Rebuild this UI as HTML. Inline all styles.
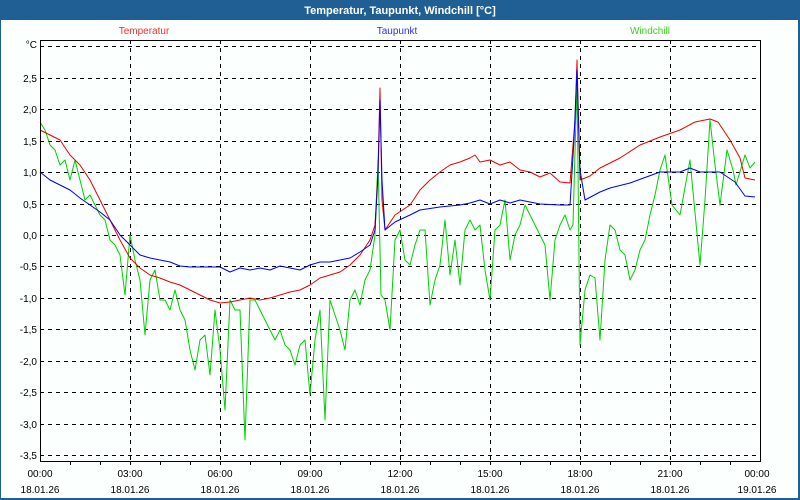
<!DOCTYPE html>
<html><head><meta charset="utf-8"><style>
html,body{margin:0;padding:0;width:800px;height:500px;overflow:hidden;background:#1f5f94}
</style></head><body>
<svg width="800" height="500" xmlns="http://www.w3.org/2000/svg" font-family="Liberation Sans, sans-serif" shape-rendering="crispEdges">
<rect x="0" y="0" width="800" height="500" fill="#1f5f94"/>
<rect x="1" y="20" width="797" height="478" fill="#fbfffd"/>
<text x="400" y="14" fill="#fff" font-size="11" font-weight="bold" text-anchor="middle">Temperatur, Taupunkt, Windchill [°C]</text>
<text x="144" y="34" fill="#f03030" font-size="10" text-anchor="middle">Temperatur</text>
<text x="397" y="34" fill="#3030f0" font-size="10" text-anchor="middle">Taupunkt</text>
<text x="650" y="34" fill="#40d020" font-size="10" text-anchor="middle">Windchill</text>
<g stroke="#000" stroke-dasharray="4,4" stroke-width="1">
<line x1="40" y1="46.5" x2="760" y2="46.5"/><line x1="40" y1="78.5" x2="760" y2="78.5"/><line x1="40" y1="109.5" x2="760" y2="109.5"/><line x1="40" y1="141.5" x2="760" y2="141.5"/><line x1="40" y1="172.5" x2="760" y2="172.5"/><line x1="40" y1="204.5" x2="760" y2="204.5"/><line x1="40" y1="235.5" x2="760" y2="235.5"/><line x1="40" y1="266.5" x2="760" y2="266.5"/><line x1="40" y1="298.5" x2="760" y2="298.5"/><line x1="40" y1="329.5" x2="760" y2="329.5"/><line x1="40" y1="361.5" x2="760" y2="361.5"/><line x1="40" y1="392.5" x2="760" y2="392.5"/><line x1="40" y1="424.5" x2="760" y2="424.5"/><line x1="40" y1="455.5" x2="760" y2="455.5"/>
<line x1="130.5" y1="40" x2="130.5" y2="461"/><line x1="220.5" y1="40" x2="220.5" y2="461"/><line x1="310.5" y1="40" x2="310.5" y2="461"/><line x1="400.5" y1="40" x2="400.5" y2="461"/><line x1="490.5" y1="40" x2="490.5" y2="461"/><line x1="580.5" y1="40" x2="580.5" y2="461"/><line x1="670.5" y1="40" x2="670.5" y2="461"/>
</g>
<g fill="none" stroke-width="1" shape-rendering="auto" stroke-linejoin="round">
<polyline stroke="#00d000" points="40,122 45,130 50,145 55,150 60,165 65,160 70,180 75,160 80,180 85,200 90,195 95,205 100,215 105,220 110,240 115,245 120,255 125,295 130,235 135,260 140,280 145,335 150,280 155,270 160,300 165,300 170,310 175,290 180,310 185,320 190,350 195,370 200,340 205,335 210,375 215,310 220,350 225,410 230,300 235,310 240,310 245,440 250,300 255,300 260,310 265,320 270,330 275,340 280,330 285,345 290,350 295,365 300,345 305,340 310,395 315,340 320,310 325,420 330,300 335,315 340,330 345,350 350,300 355,290 360,305 365,280 370,270 375,235 378,160 381,295 385,300 390,330 395,240 400,230 405,260 410,265 415,245 420,230 425,230 430,305 435,280 440,265 445,220 450,275 455,240 460,285 465,230 470,220 475,230 480,225 485,270 490,300 495,230 500,225 505,200 510,260 515,235 520,225 525,205 530,215 535,225 540,235 545,245 550,300 555,240 560,225 565,215 570,230 573,225 577,80 580,345 585,290 590,275 595,278 600,340 605,260 610,225 615,230 620,250 625,255 630,280 635,270 640,250 645,240 650,215 655,195 660,170 665,155 672,205 680,215 690,160 700,265 705,200 710,120 715,165 720,205 727,150 733,170 736,185 745,155 750,168 755,162"/>
<polyline stroke="#f00000" points="40,130 50,135 60,140 70,155 80,165 90,180 100,200 110,220 120,240 130,258 140,268 150,275 160,278 170,282 180,285 190,290 200,295 210,300 220,303 230,302 240,300 250,298 260,300 270,298 280,295 290,292 300,290 310,285 320,278 330,275 340,272 350,265 360,255 370,240 375,225 378,170 380,88 382,200 385,230 395,215 410,205 420,190 430,180 440,172 450,165 460,162 470,158 475,155 480,162 490,160 500,165 510,162 520,170 530,172 540,177 550,173 560,182 570,183 575,120 577,60 580,180 590,176 600,168 620,158 640,145 660,137 680,130 695,122 710,119 718,122 730,140 740,158 745,178 755,180"/>
<polyline stroke="#0000f0" points="40,172 50,180 60,185 70,190 80,198 90,205 100,212 110,220 120,235 130,245 140,255 150,258 160,260 170,262 180,266 190,267 200,267 210,267 220,267 230,272 240,268 250,270 260,268 270,270 280,266 290,268 300,270 310,265 320,262 330,262 340,260 350,258 360,252 370,245 375,230 378,175 380,100 382,180 385,230 395,222 410,215 420,210 440,207 460,205 470,203 480,200 490,204 500,200 510,203 520,200 540,204 560,205 570,205 574,140 577,70 580,170 585,200 600,192 610,188 630,183 660,172 680,172 690,168 700,172 720,172 735,182 745,196 755,197"/>
</g>
<g stroke="#000" stroke-width="1">
<line x1="40" y1="40.5" x2="761" y2="40.5"/><line x1="760.5" y1="40" x2="760.5" y2="462"/><line x1="40" y1="461.5" x2="761" y2="461.5"/><line x1="40.5" y1="40" x2="40.5" y2="462"/>
</g>
<g stroke="#000" stroke-width="1">
<line x1="70.5" y1="461" x2="70.5" y2="465"/><line x1="100.5" y1="461" x2="100.5" y2="465"/><line x1="130.5" y1="461" x2="130.5" y2="465"/><line x1="160.5" y1="461" x2="160.5" y2="465"/><line x1="190.5" y1="461" x2="190.5" y2="465"/><line x1="220.5" y1="461" x2="220.5" y2="465"/><line x1="250.5" y1="461" x2="250.5" y2="465"/><line x1="280.5" y1="461" x2="280.5" y2="465"/><line x1="310.5" y1="461" x2="310.5" y2="465"/><line x1="340.5" y1="461" x2="340.5" y2="465"/><line x1="370.5" y1="461" x2="370.5" y2="465"/><line x1="400.5" y1="461" x2="400.5" y2="465"/><line x1="430.5" y1="461" x2="430.5" y2="465"/><line x1="460.5" y1="461" x2="460.5" y2="465"/><line x1="490.5" y1="461" x2="490.5" y2="465"/><line x1="520.5" y1="461" x2="520.5" y2="465"/><line x1="550.5" y1="461" x2="550.5" y2="465"/><line x1="580.5" y1="461" x2="580.5" y2="465"/><line x1="610.5" y1="461" x2="610.5" y2="465"/><line x1="640.5" y1="461" x2="640.5" y2="465"/><line x1="670.5" y1="461" x2="670.5" y2="465"/><line x1="700.5" y1="461" x2="700.5" y2="465"/><line x1="730.5" y1="461" x2="730.5" y2="465"/>
</g>
<g font-size="10" fill="#000" text-anchor="end">
<text x="37" y="48">°C</text><text x="37" y="82">2,5</text><text x="37" y="113">2,0</text><text x="37" y="145">1,5</text><text x="37" y="176">1,0</text><text x="37" y="208">0,5</text><text x="37" y="239">0,0</text><text x="37" y="270">-0,5</text><text x="37" y="302">-1,0</text><text x="37" y="333">-1,5</text><text x="37" y="365">-2,0</text><text x="37" y="396">-2,5</text><text x="37" y="428">-3,0</text><text x="37" y="459">-3,5</text>
</g>
<g font-size="10" fill="#000" text-anchor="middle">
<text x="40" y="477">00:00</text><text x="40" y="493">18.01.26</text>
<text x="130" y="477">03:00</text><text x="130" y="493">18.01.26</text>
<text x="220" y="477">06:00</text><text x="220" y="493">18.01.26</text>
<text x="310" y="477">09:00</text><text x="310" y="493">18.01.26</text>
<text x="400" y="477">12:00</text><text x="400" y="493">18.01.26</text>
<text x="490" y="477">15:00</text><text x="490" y="493">18.01.26</text>
<text x="580" y="477">18:00</text><text x="580" y="493">18.01.26</text>
<text x="670" y="477">21:00</text><text x="670" y="493">18.01.26</text>
<text x="757" y="477">00:00</text><text x="757" y="493">19.01.26</text>
</g>
</svg>
</body></html>
